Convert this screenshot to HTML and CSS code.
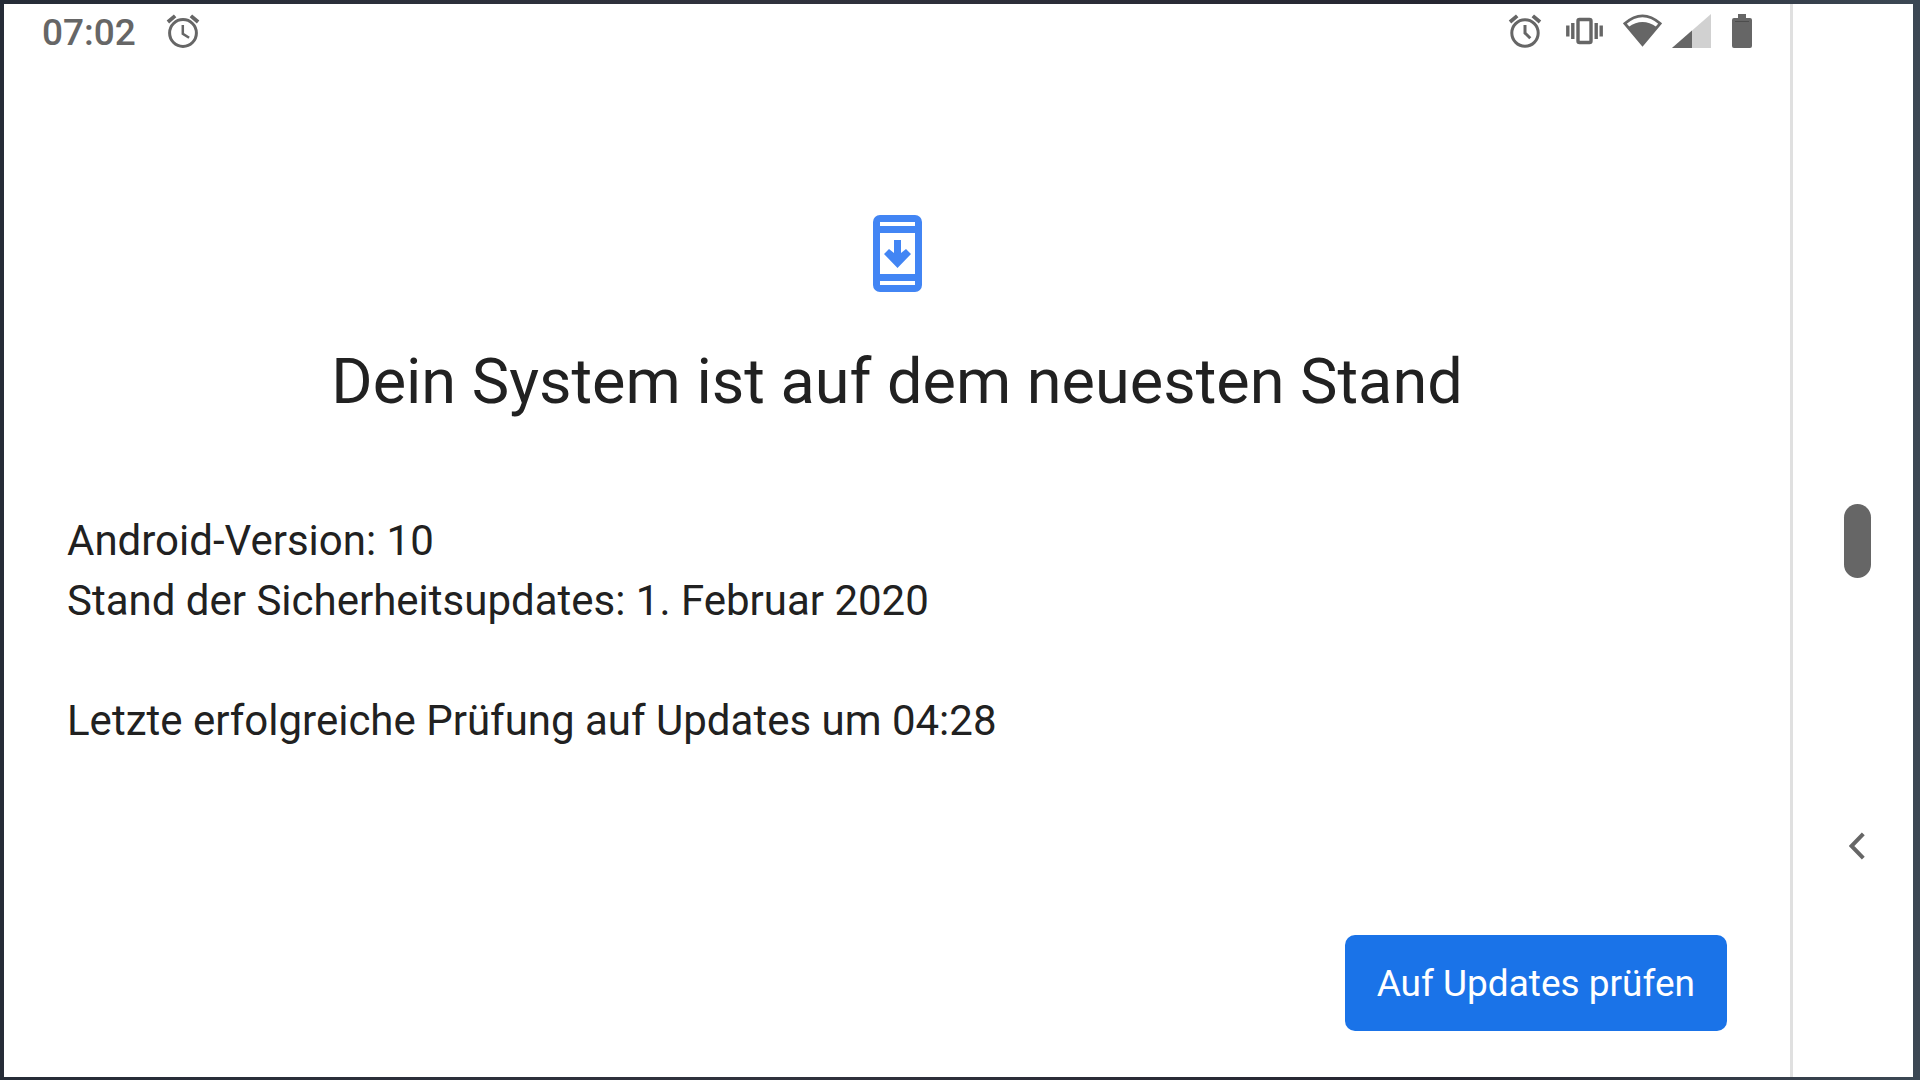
FILE: index.html
```html
<!DOCTYPE html>
<html lang="de">
<head>
<meta charset="utf-8">
<meta name="viewport" content="width=device-width, initial-scale=1">
<title>Systemupdate</title>
<link rel="stylesheet" href="styles.css">
</head>
<body>
<div class="screen">
  <div class="app">
    <header class="status">
      <div class="status-group status-left">
        <time class="clock">07:02</time>
        <svg class="alarm" viewBox="0 0 34 34" aria-hidden="true"><g fill="none" stroke="currentColor"><circle cx="17" cy="19" r="13.4" stroke-width="3"/><path d="M1.9 8 9.1 1.9M32.1 8 24.9 1.9" stroke-width="3.8"/><path d="M16.8 11v8.8l6.3 4" stroke-width="2.5"/></g></svg>
      </div>
      <div class="status-group status-right">
        <svg class="alarm" viewBox="0 0 34 34" aria-hidden="true"><g fill="none" stroke="currentColor"><circle cx="17" cy="19" r="13.2" stroke-width="3"/><path d="M2 8 9.2 1.9M32 8 24.8 1.9" stroke-width="3.8"/><path d="M17 11v8l5.3 5.2" stroke-width="3"/></g></svg>
        <svg class="vibrate" viewBox="0 0 37 34" aria-hidden="true"><g fill="none" stroke="currentColor" stroke-width="3.4"><rect x="12" y="5.500" width="13" height="23" rx="1.500"/><path d="M1.800 11.500v11M6.800 9v16M30.200 9v16M35.200 11.500v11"/></g></svg>
        <svg class="wifi" viewBox="0 0 39 34" aria-hidden="true"><path d="M1.800 9.500Q19.500-5.800 37.200 9.500L19.500 30.500Z" fill="none" stroke="currentColor" stroke-width="2.800"/><path d="M5.500 13Q19.500 3 33.500 13L19.500 31Z" fill="currentColor"/></svg>
        <svg class="signal" viewBox="0 0 39 34" aria-hidden="true"><path d="M39 0v34H0Z" fill="#d1d1d1"/><path d="M20 16.600V34H0Z" fill="currentColor"/></svg>
        <svg class="battery" viewBox="0 0 20 34" aria-hidden="true"><path d="M6 0h8v4h4a2 2 0 0 1 2 2v26a2 2 0 0 1-2 2H2a2 2 0 0 1-2-2V6a2 2 0 0 1 2-2h4Z" fill="currentColor"/><path d="M3 7.500h14" stroke="#4d4d4d"/></svg>
      </div>
    </header>
    <main class="content">
      <svg class="update-icon" viewBox="0 0 49 77" aria-hidden="true"><path fill="#4285f4" fill-rule="evenodd" d="M7 0h35a7 7 0 0 1 7 7v63a7 7 0 0 1-7 7H7a7 7 0 0 1-7-7V7a7 7 0 0 1 7-7ZM7 7v4h35V7ZM7 18v41h35V18ZM7 66v4h35v-4Z"/><path fill="#4285f4" d="M21 25h7v13l5-4 5 5-13.500 14L11 39l5-5 5 4Z"/></svg>
      <h1 class="title">Dein System ist auf dem neuesten Stand</h1>
      <div class="details">
        <p>Android-Version: 10</p>
        <p>Stand der Sicherheitsupdates: 1. Februar 2020</p>
        <p class="last-check">Letzte erfolgreiche Prüfung auf Updates um 04:28</p>
      </div>
      <button class="check" type="button">Auf Updates prüfen</button>
    </main>
  </div>
  <nav class="navbar" aria-label="Systemnavigation">
    <button class="home" type="button" aria-label="Startbildschirm"></button>
    <button class="back" type="button" aria-label="Zurück"><svg viewBox="0 0 16 28" aria-hidden="true"><path d="M14.300 1.800 2.500 14l11.800 12.200" fill="none" stroke="currentColor" stroke-width="4"/></svg></button>
  </nav>
</div>
</body>
</html>
```
FILE: styles.css
```css
* {
  box-sizing: border-box;
}

body {
  display: flex;
  min-height: 100vh;
  margin: 0;
  padding: 4px 7px 3px 4px;
  background: linear-gradient(to right, #262c37, #30323d 40%, #252631 75%, #3c4854);
  color: #212121;
  font-family: Roboto, "Liberation Sans", sans-serif;
}

.screen {
  display: flex;
  flex: 1;
  background: #fff;
}

.app {
  display: flex;
  flex: 1;
  flex-direction: column;
}

.status {
  display: flex;
  justify-content: space-between;
  height: 54px;
  padding: 0 38px;
  color: #666;
}

.status-group {
  display: flex;
  align-items: center;
}

.status-left {
  gap: 30px;
}

.clock {
  padding-top: 4px;
  font-size: 37px;
  font-weight: 500;
  line-height: 50px;
}

.status svg {
  height: 34px;
}

.alarm {
  width: 34px;
}

.vibrate {
  width: 37px;
  margin-left: 24px;
}

.wifi {
  width: 39px;
  margin-left: 20px;
}

.signal {
  width: 39px;
  margin-left: 10px;
}

.battery {
  width: 20px;
  margin-left: 21px;
}

.content {
  display: flex;
  flex: 1;
  flex-direction: column;
  padding: 157px 63px 46px;
}

.update-icon {
  align-self: center;
  width: 49px;
  height: 77px;
}

.title {
  margin: 50px 0 0;
  font-size: 63px;
  font-weight: 400;
  line-height: 80px;
  text-align: center;
}

.details {
  margin-top: 89px;
  font-size: 42px;
  line-height: 60px;
}

.details p {
  margin: 0;
}

.details .last-check {
  margin-top: 60px;
}

button {
  border: 0;
  font-family: inherit;
  cursor: pointer;
}

.check {
  align-self: flex-end;
  height: 96px;
  margin-top: auto;
  padding: 2px 32px 0;
  border-radius: 10px;
  background: #1a73e8;
  color: #fff;
  font-size: 37px;
  line-height: 48px;
}

.navbar {
  display: grid;
  grid-template-rows: 1fr 74px 1fr;
  justify-items: center;
  width: 123px;
  padding-left: 8px;
  border-left: 3px solid #e0e0e0;
  color: #666;
}

.home {
  grid-row: 2;
  width: 27px;
  padding: 0;
  border-radius: 14px;
  background: #666;
}

.back {
  display: flex;
  grid-row: 3;
  align-items: center;
  justify-content: center;
  width: 64px;
  height: 64px;
  margin-top: 236px;
  padding: 0;
  background: transparent;
  color: inherit;
}

.back svg {
  width: 16px;
  height: 28px;
}
```
